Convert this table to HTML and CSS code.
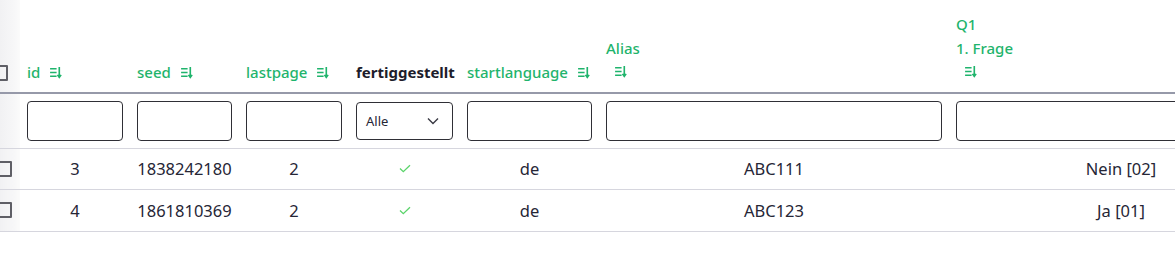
FILE: index.html
```html
<!DOCTYPE html>
<html lang="de">
<head>
<meta charset="utf-8">
<title>Ergebnisse</title>
<link rel="stylesheet" href="styles.css">
</head>
<body>
<div class="wrap">
<table class="grid">
  <colgroup>
    <col class="c-sel">
    <col class="c-id">
    <col class="c-seed">
    <col class="c-last">
    <col class="c-done">
    <col class="c-lang">
    <col class="c-alias">
    <col class="c-q1">
  </colgroup>
  <thead>
    <tr class="head">
      <th class="sel"><span class="box box-head"></span></th>
      <th><span class="lbl">id</span><svg class="sort" viewBox="0 0 12 12"><path d="M1 2.5h6M1 6h6M1 9.5h6" /><path d="M9.5 1v9.5M7.8 8.2l1.7 2.3 1.7-2.3" /></svg></th>
      <th><span class="lbl">seed</span><svg class="sort" viewBox="0 0 12 12"><path d="M1 2.5h6M1 6h6M1 9.5h6" /><path d="M9.5 1v9.5M7.8 8.2l1.7 2.3 1.7-2.3" /></svg></th>
      <th><span class="lbl">lastpage</span><svg class="sort" viewBox="0 0 12 12"><path d="M1 2.5h6M1 6h6M1 9.5h6" /><path d="M9.5 1v9.5M7.8 8.2l1.7 2.3 1.7-2.3" /></svg></th>
      <th><span class="lbl lbl-dark">fertiggestellt</span></th>
      <th><span class="lbl">startlanguage</span><svg class="sort" viewBox="0 0 12 12"><path d="M1 2.5h6M1 6h6M1 9.5h6" /><path d="M9.5 1v9.5M7.8 8.2l1.7 2.3 1.7-2.3" /></svg></th>
      <th><div class="lbl">Alias</div><svg class="sort sort-block" viewBox="0 0 12 12"><path d="M1 2.5h6M1 6h6M1 9.5h6" /><path d="M9.5 1v9.5M7.8 8.2l1.7 2.3 1.7-2.3" /></svg></th>
      <th><div class="lbl">Q1</div><div class="lbl">1. Frage</div><svg class="sort sort-block" viewBox="0 0 12 12"><path d="M1 2.5h6M1 6h6M1 9.5h6" /><path d="M9.5 1v9.5M7.8 8.2l1.7 2.3 1.7-2.3" /></svg></th>
    </tr>
    <tr class="filters">
      <td class="sel"></td>
      <td><input class="inp" type="text"></td>
      <td><input class="inp" type="text"></td>
      <td><input class="inp" type="text"></td>
      <td><div class="select"><span>Alle</span><svg class="chev" viewBox="0 0 12 8"><path d="M1 1.5l5 5 5-5" /></svg></div></td>
      <td><input class="inp" type="text"></td>
      <td><input class="inp" type="text"></td>
      <td><input class="inp" type="text"></td>
    </tr>
  </thead>
  <tbody>
    <tr class="row">
      <td class="sel"><span class="box"></span></td>
      <td>3</td>
      <td>1838242180</td>
      <td>2</td>
      <td><svg class="check" viewBox="0 0 12 9"><path d="M1 4.5l3.3 3.2L11 1.2" /></svg></td>
      <td>de</td>
      <td>ABC111</td>
      <td>Nein [02]</td>
    </tr>
    <tr class="row">
      <td class="sel"><span class="box"></span></td>
      <td>4</td>
      <td>1861810369</td>
      <td>2</td>
      <td><svg class="check" viewBox="0 0 12 9"><path d="M1 4.5l3.3 3.2L11 1.2" /></svg></td>
      <td>de</td>
      <td>ABC123</td>
      <td>Ja [01]</td>
    </tr>
  </tbody>
</table>
</div>
</body>
</html>
```

FILE: styles.css
```css
html, body {
  margin: 0;
  padding: 0;
  background: #ffffff;
}

body {
  font-family: "Noto Sans", "Open Sans", sans-serif;
  color: #262636;
  overflow: hidden;
}

.wrap {
  width: 1175px;
  overflow: hidden;
}

.grid {
  border-collapse: collapse;
  table-layout: fixed;
  width: 1293px;
}

.c-sel { width: 20px; }
.c-id { width: 110px; }
.c-seed { width: 109px; }
.c-last { width: 110px; }
.c-done { width: 111px; }
.c-lang { width: 139px; }
.c-alias { width: 350px; }
.c-q1 { width: 344px; }

.grid th,
.grid td {
  padding: 0 7px;
}

.grid .sel {
  padding: 0;
  background: linear-gradient(to right, #f1f1f3 0%, #f7f7f8 70%, #fbfbfb 100%);
  overflow: visible;
}

.head th {
  height: 93px;
  vertical-align: bottom;
  text-align: left;
  padding-bottom: 8px;
  border-bottom: 2px solid #9699a9;
  font-weight: 500;
  font-size: 15px;
  line-height: 24px;
  box-sizing: border-box;
}

.lbl {
  color: #1fb46c;
  white-space: nowrap;
}

.lbl-dark {
  color: #1d1d2b;
  font-weight: 700;
}

.sort {
  width: 13px;
  height: 13px;
  margin-left: 9px;
  vertical-align: -1px;
  fill: none;
  stroke: #1fb46c;
  stroke-width: 1.5;
}

.sort-block {
  display: block;
  margin: 5px 0 6px 8px;
}

.box {
  display: block;
  width: 16px;
  height: 16px;
  box-sizing: border-box;
  border: 2px solid #5f5f66;
  border-radius: 1px;
  margin-left: -4px;
}

.box-head {
  margin-left: -8px;
  margin-bottom: 11px;
}

.filters td {
  height: 55px;
  box-sizing: border-box;
  border-bottom: 1px solid #d6d6de;
  vertical-align: middle;
}

.inp {
  display: block;
  width: 100%;
  height: 40px;
  box-sizing: border-box;
  border: 1px solid #2f2f36;
  border-radius: 4px;
  background: #fff;
  margin: 0;
  padding: 0 8px;
  font: inherit;
}

.select {
  display: flex;
  align-items: center;
  justify-content: space-between;
  height: 38px;
  box-sizing: border-box;
  border: 1px solid #2f2f36;
  border-radius: 4px;
  padding: 0 13px 0 9px;
  font-size: 13px;
  color: #262636;
}

.chev {
  width: 12px;
  height: 8px;
  fill: none;
  stroke: #3a3a44;
  stroke-width: 1.4;
}

.row td {
  height: 41px;
  box-sizing: border-box;
  border-bottom: 1px solid #d6d6de;
  text-align: center;
  vertical-align: middle;
  font-size: 16.5px;
  color: #262636;
}

.row:last-child td {
  height: 42px;
}

.check {
  width: 12px;
  height: 9px;
  fill: none;
  stroke: #5ad46a;
  stroke-width: 1.3;
  display: block;
  margin: 0 auto;
}
```
